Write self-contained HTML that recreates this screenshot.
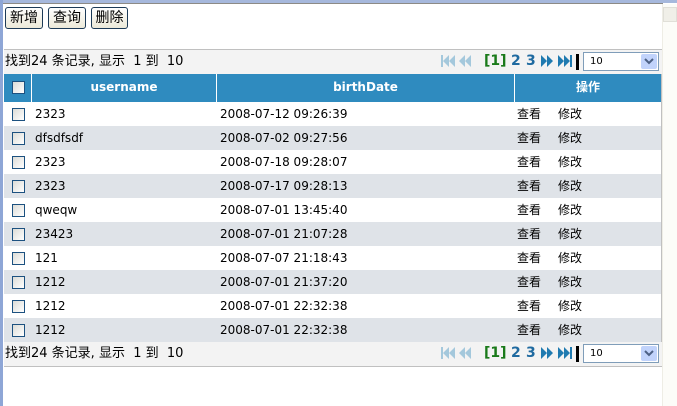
<!DOCTYPE html>
<html><head><meta charset="utf-8"><style>
*{margin:0;padding:0;box-sizing:border-box}
body{width:677px;height:406px;overflow:hidden;background:#fff;position:relative;font-family:"DejaVu Sans","Noto Sans CJK SC",sans-serif;font-size:12px;color:#000}
.a{position:absolute}
.btn{position:absolute;top:7px;height:22px;border:1px solid #1c3a57;border-radius:3px;background:linear-gradient(#fff,#ece9d8);font-family:"Noto Sans CJK SC",sans-serif;font-size:14px;line-height:19px;text-align:center}
.bar{position:absolute;left:4px;width:658px;height:24px;background:#f3f3f3;font-family:"DejaVu Sans","Noto Sans CJK SC",sans-serif;font-size:13px;line-height:24px;padding-left:1px}
.row{position:absolute;left:4px;width:657px;height:24px;line-height:24px;font-size:12px}
.row span{position:absolute}
.cb{position:absolute;left:8px;top:6px;width:13px;height:13px;border:1px solid #1c5180;background:linear-gradient(135deg,#dcdcd7,#fff)}
.pg{position:absolute;font-family:"DejaVu Sans",sans-serif;font-weight:bold;font-size:14px}
.sel{position:absolute;width:76px;height:19px;border:1px solid #7f9db9;background:#fff;font-size:10px;line-height:17px;padding-left:6px}
.sel svg{position:absolute;right:1px;top:1px}
</style></head><body>
<div class="a" style="left:0;top:0;width:677px;height:3px;background:#a6b8dc"></div>
<div class="a" style="left:0;top:3px;width:663px;height:1px;background:#8c8a86"></div>
<div class="a" style="left:0;top:0;width:3px;height:406px;background:#8ea6d6"></div>
<div class="a" style="left:662px;top:4px;width:15px;height:402px;background:#fcfcf8;border-left:1px solid #eeede5"></div>
<div class="a" style="left:663px;top:7px;width:14px;height:15px;background:#f0efe8;border:1px solid #e0dfd8"></div>

<div class="btn" style="left:5px;width:38px">新增</div>
<div class="btn" style="left:48px;width:38px">查询</div>
<div class="btn" style="left:91px;width:37px">删除</div>

<div class="a" style="left:4px;top:49px;width:658px;height:318px;border:1px solid #c0c0c0"></div>
<div class="bar" style="top:50px">找到24 条记录, 显示 &nbsp;1 到 &nbsp;10</div>
<div class="bar" style="top:342px">找到24 条记录, 显示 &nbsp;1 到 &nbsp;10</div>

<div class="a" style="left:4px;top:74px;width:657px;height:28px;background:#2f8bbf"></div>
<div class="a" style="left:31px;top:74px;width:1px;height:28px;background:#fff"></div>
<div class="a" style="left:216px;top:74px;width:1px;height:28px;background:#fff"></div>
<div class="a" style="left:514px;top:74px;width:1px;height:28px;background:#fff"></div>
<div class="cb" style="left:12px;top:81px"></div>
<div class="a" style="left:32px;top:80px;width:184px;text-align:center;color:#fff;font-weight:bold;font-size:12px">username</div>
<div class="a" style="left:217px;top:80px;width:297px;text-align:center;color:#fff;font-weight:bold;font-size:12px">birthDate</div>
<div class="a" style="left:515px;top:78px;width:146px;text-align:center;color:#fff;font-weight:bold;font-size:12px;font-family:'Noto Sans CJK SC',sans-serif">操作</div>

<div id="rows"></div>
<script>
var d=[["2323","2008-07-12 09:26:39"],["dfsdfsdf","2008-07-02 09:27:56"],["2323","2008-07-18 09:28:07"],["2323","2008-07-17 09:28:13"],["qweqw","2008-07-01 13:45:40"],["23423","2008-07-01 21:07:28"],["121","2008-07-07 21:18:43"],["1212","2008-07-01 21:37:20"],["1212","2008-07-01 22:32:38"],["1212","2008-07-01 22:32:38"]];
var h="";
d.forEach(function(r,i){h+='<div class="row" style="top:'+(102+i*24)+'px;background:'+(i%2?'#dfe3e8':'#fff')+'"><div class="cb"></div><span style="left:31px">'+r[0]+'</span><span style="left:216px">'+r[1]+'</span><span style="left:513px;font-family:\'Noto Sans CJK SC\',sans-serif">查看</span><span style="left:554px;font-family:\'Noto Sans CJK SC\',sans-serif">修改</span></div>';});
document.getElementById('rows').innerHTML=h;
function pager(y){return '<svg class="a" style="left:440px;top:'+(y+4)+'px" width="34" height="14"><rect x="1" y="1" width="2" height="12" fill="#a4c8dc"/><path d="M3 7l6-6v12zM9 7l6-6v12z" fill="#a4c8dc"/><path d="M19 7l6-6v12zM25 7l6-6v12z" fill="#a4c8dc"/></svg>'+
'<div class="pg" style="left:484px;top:'+(y+3)+'px;color:#1a7a1a">[1]</div><div class="pg" style="left:511px;top:'+(y+3)+'px;color:#1f6aa0">2</div><div class="pg" style="left:526px;top:'+(y+3)+'px;color:#1f6aa0">3</div>'+
'<svg class="a" style="left:540px;top:'+(y+4)+'px" width="40" height="16"><path d="M1 1l6 6-6 6zM7 1l6 6-6 6z" fill="#1f7ab0"/><path d="M18 1l6 6-6 6zM24 1l6 6-6 6z" fill="#1f7ab0"/><rect x="30" y="1" width="2" height="12" fill="#1f7ab0"/><rect x="36" y="-1" width="3" height="17" fill="#000"/></svg>'+
'<div class="sel" style="left:583px;top:'+(y+2)+'px">10<svg width="16" height="15"><rect width="16" height="15" rx="2" fill="#c1d3fb"/><path d="M4 5l4 4 4-4" stroke="#4d6185" stroke-width="2" fill="none"/></svg></div>';}
document.body.insertAdjacentHTML('beforeend',pager(50)+pager(342));
</script>
</body></html>
